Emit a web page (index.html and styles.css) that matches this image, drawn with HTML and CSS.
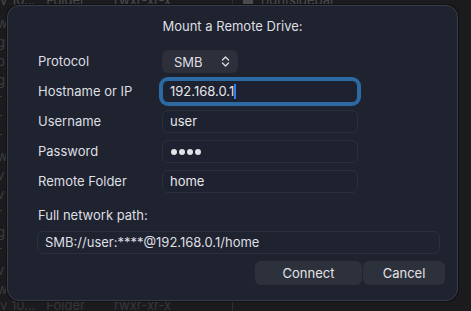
FILE: index.html
```html
<!DOCTYPE html>
<html>
<head>
<meta charset="utf-8">
<link rel="stylesheet" href="styles.css">
</head>
<body>
<div class="backdrop">
  <div class="bg-top">
    <span class="bg-left">v 10...&nbsp;&nbsp;&nbsp;Folder&nbsp;&nbsp;&nbsp;&nbsp;&nbsp;&nbsp;&nbsp;&nbsp;rwxr-xr-x</span>
    <span class="bg-right"><i class="bg-icon"></i>rightsidebar</span>
  </div>
  <div class="bg-col">
    <span>w</span><span>g</span><span>p</span><span>g</span><span>r</span><span>r</span><span>r</span><span>w</span><span>v</span><span>v</span><span>r</span><span>g</span><span>r</span><span>v</span><span>w</span>
  </div>
  <div class="bg-divider"></div>
  <div class="bg-bottom">v 10...&nbsp;&nbsp;&nbsp;Folder&nbsp;&nbsp;&nbsp;&nbsp;&nbsp;&nbsp;&nbsp;&nbsp;rwxr-xr-x</div>
</div>

<div class="dialog">
  <div class="title">Mount a Remote Drive:</div>
  <div class="form">
    <div class="label">Protocol</div>
    <div class="field-cell">
      <div class="popup"><span>SMB</span>
        <svg class="chev" width="9" height="13" viewBox="0 0 9 13"><path d="M1.5 5 L4.5 2 L7.5 5 M1.5 8 L4.5 11 L7.5 8" fill="none" stroke="#d8d9dc" stroke-width="1.4" stroke-linecap="round" stroke-linejoin="round"/></svg>
      </div>
    </div>
    <div class="label">Hostname or IP</div>
    <div class="field-cell"><div class="input focus"><span>192.168.0.1</span><i class="caret"></i></div></div>
    <div class="label">Username</div>
    <div class="field-cell"><div class="input">user</div></div>
    <div class="label">Password</div>
    <div class="field-cell"><div class="input dots" aria-label="password"><i></i><i></i><i></i><i></i></div></div>
    <div class="label">Remote Folder</div>
    <div class="field-cell"><div class="input">home</div></div>
  </div>
  <div class="path-label">Full network path:</div>
  <div class="path">SMB://user:****@192.168.0.1/home</div>
  <div class="actions">
    <div class="btn connect">Connect</div>
    <div class="btn cancel">Cancel</div>
  </div>
</div>
</body>
</html>
```

FILE: styles.css
```css
html, body {
  margin: 0;
  padding: 0;
  width: 471px;
  height: 311px;
  overflow: hidden;
  background: #1b1b1d;
  font-family: "Inter", "Liberation Sans", sans-serif;
}

.backdrop {
  position: absolute;
  inset: 0;
  color: #4a4b4f;
  font-size: 13px;
}

.bg-top {
  position: absolute;
  top: -8px;
  left: 0;
  right: 0;
  height: 14px;
}
.bg-left {
  position: absolute;
  left: 0;
}
.bg-right {
  position: absolute;
  left: 243px;
  display: flex;
  align-items: center;
  gap: 8px;
}
.bg-icon {
  display: inline-block;
  width: 10px;
  height: 10px;
  background: #4a4b4f;
  border-radius: 1px;
}
.bg-col {
  position: absolute;
  left: -3px;
  top: 14px;
  display: flex;
  flex-direction: column;
  line-height: 19px;
  color: #3c3d41;
}
.bg-divider {
  position: absolute;
  left: 232px;
  top: 0;
  bottom: 0;
  width: 1px;
  background: #2e2f33;
}
.bg-bottom {
  position: absolute;
  left: 0;
  top: 297px;
  color: #36373b;
}

.dialog {
  position: absolute;
  left: 7px;
  top: 5px;
  width: 451px;
  height: 296px;
  box-sizing: border-box;
  background: #1f2330;
  border: 1px solid #3a3d47;
  border-radius: 12px;
  box-shadow: 0 0 0 1px #101114;
  padding: 12px 12px 0 30px;
  color: #dedfe2;
  font-size: 13px;
  display: flex;
  flex-direction: column;
}

.title {
  text-align: center;
  line-height: 16px;
  margin-left: -18px;
  margin-bottom: 16px;
}

.form {
  display: grid;
  grid-template-columns: 124px 196px;
  grid-auto-rows: 23px;
  row-gap: 7px;
  align-items: center;
}

.label {
  line-height: 23px;
}

.field-cell {
  height: 23px;
  display: flex;
}

.popup {
  width: 76px;
  height: 23px;
  box-sizing: border-box;
  background: #2d303b;
  border-radius: 6px;
  display: flex;
  align-items: center;
  justify-content: space-between;
  padding: 0 8px 0 12px;
}

.input {
  width: 196px;
  height: 23px;
  box-sizing: border-box;
  border: 1px solid #2b2f3a;
  background: #1e2230;
  border-radius: 6px;
  padding: 0 7px;
  line-height: 21px;
  display: flex;
  align-items: center;
  color: #e6e7ea;
}
.input.focus {
  box-shadow: 0 0 0 3px #2b6aa3;
  border-color: #2b6aa3;
  background: #1d2130;
}
.caret {
  display: inline-block;
  width: 2px;
  height: 15px;
  background: #2e7bf6;
}
.dots {
  gap: 2px;
  padding-left: 8px;
}
.dots i {
  display: block;
  width: 6px;
  height: 6px;
  border-radius: 50%;
  background: #e2e3e6;
}

.path-label {
  margin-top: 14px;
  line-height: 16px;
}
.path {
  margin-top: 8px;
  width: 403px;
  height: 23px;
  box-sizing: border-box;
  margin-left: -1px;
  border: 1px solid #2b2f3a;
  border-radius: 6px;
  padding: 0 7px;
  line-height: 21px;
}

.actions {
  display: flex;
  justify-content: flex-end;
  gap: 1px;
  margin-top: 7px;
}
.btn {
  height: 24px;
  line-height: 24px;
  text-align: center;
  background: #2d313c;
  border-radius: 6px;
  color: #e2e3e6;
}
.connect { width: 107px; }
.cancel { width: 82px; }
```
